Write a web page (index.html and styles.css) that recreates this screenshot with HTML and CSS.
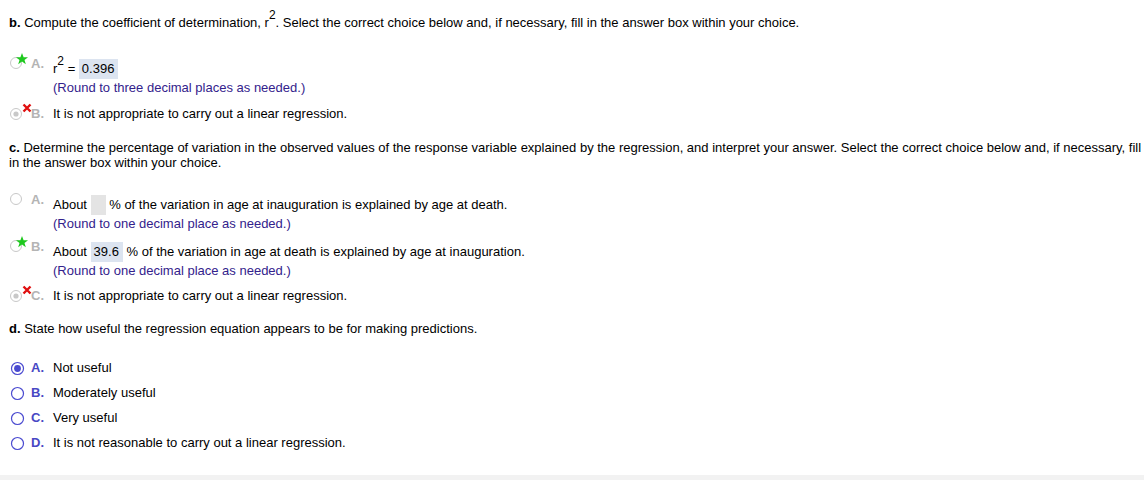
FILE: index.html
```html
<!DOCTYPE html>
<html>
<head>
<meta charset="utf-8">
<link rel="stylesheet" href="styles.css">
</head>
<body>
<div class="page">
  <div class="q q-b"><b>b.</b> Compute the coefficient of determination, r<sup class="sq">2</sup>. Select the correct choice below and, if necessary, fill in the answer box within your choice.</div>

  <div class="opt opt-box first-b">
    <span class="mark"><svg class="tall" width="22" height="24" viewBox="0 0 22 24"><circle cx="7" cy="10" r="5.5" fill="#fff" stroke="#c8c8c8" stroke-width="1"/><polygon points="13,0 14.6,4.2 19,4.2 15.5,6.9 16.8,11.2 13,8.6 9.2,11.2 10.5,6.9 7,4.2 11.4,4.2" fill="#1ec81e"/></svg></span>
    <span class="letter dis">A.</span>
    <div class="body">
      <div class="line">r<sup class="sq">2</sup> = <span class="ans">0.396</span></div>
      <div class="hint">(Round to three decimal places as needed.)</div>
    </div>
  </div>

  <div class="opt opt-plain gap10">
    <span class="mark"><svg class="xmark" width="22" height="20" viewBox="0 0 22 20"><circle cx="7" cy="13" r="5.5" fill="#fff" stroke="#c8c8c8" stroke-width="1"/><circle cx="7" cy="13" r="2.6" fill="#c8c8c8"/><path d="M14.5 3.5 L21.5 10.5 M21.5 3.5 L14.5 10.5" stroke="#e01010" stroke-width="2.4"/></svg></span>
    <span class="letter dis">B.</span>
    <div class="body"><div class="line">It is not appropriate to carry out a linear regression.</div></div>
  </div>

  <div class="q q-c"><b>c.</b> Determine the percentage of variation in the observed values of the response variable explained by the regression, and interpret your answer. Select the correct choice below and, if necessary, fill in the answer box within your choice.</div>

  <div class="opt opt-box first-c">
    <span class="mark"><svg class="tall" width="22" height="24" viewBox="0 0 22 24"><circle cx="7" cy="10" r="5.5" fill="#fff" stroke="#c8c8c8" stroke-width="1"/></svg></span>
    <span class="letter dis">A.</span>
    <div class="body">
      <div class="line">About <span class="ans empty"></span> % of the variation in age at inauguration is explained by age at death.</div>
      <div class="hint">(Round to one decimal place as needed.)</div>
    </div>
  </div>

  <div class="opt opt-box gap10">
    <span class="mark"><svg class="tall" width="22" height="24" viewBox="0 0 22 24"><circle cx="7" cy="10" r="5.5" fill="#fff" stroke="#c8c8c8" stroke-width="1"/><polygon points="13,0 14.6,4.2 19,4.2 15.5,6.9 16.8,11.2 13,8.6 9.2,11.2 10.5,6.9 7,4.2 11.4,4.2" fill="#1ec81e"/></svg></span>
    <span class="letter dis">B.</span>
    <div class="body">
      <div class="line">About <span class="ans">39.6</span> % of the variation in age at death is explained by age at inauguration.</div>
      <div class="hint">(Round to one decimal place as needed.)</div>
    </div>
  </div>

  <div class="opt opt-plain gap9">
    <span class="mark"><svg class="xmark" width="22" height="20" viewBox="0 0 22 20"><circle cx="7" cy="13" r="5.5" fill="#fff" stroke="#c8c8c8" stroke-width="1"/><circle cx="7" cy="13" r="2.6" fill="#c8c8c8"/><path d="M14.5 3.5 L21.5 10.5 M21.5 3.5 L14.5 10.5" stroke="#e01010" stroke-width="2.4"/></svg></span>
    <span class="letter dis">C.</span>
    <div class="body"><div class="line">It is not appropriate to carry out a linear regression.</div></div>
  </div>

  <div class="q q-d"><b>d.</b> State how useful the regression equation appears to be for making predictions.</div>

  <div class="choices">
    <div class="opt opt-plain">
      <span class="mark"><svg width="22" height="16" viewBox="0 0 22 16"><circle cx="8.5" cy="8.5" r="6" fill="#fff" stroke="#4a4ad0" stroke-width="1.2"/><circle cx="8.5" cy="8.5" r="3.4" fill="#4a4ad0"/></svg></span>
      <span class="letter act">A.</span>
      <div class="body"><div class="line">Not useful</div></div>
    </div>
    <div class="opt opt-plain">
      <span class="mark"><svg width="22" height="16" viewBox="0 0 22 16"><circle cx="8.5" cy="8.5" r="6" fill="#fff" stroke="#4a4ad0" stroke-width="1.2"/></svg></span>
      <span class="letter act">B.</span>
      <div class="body"><div class="line">Moderately useful</div></div>
    </div>
    <div class="opt opt-plain">
      <span class="mark"><svg width="22" height="16" viewBox="0 0 22 16"><circle cx="8.5" cy="8.5" r="6" fill="#fff" stroke="#4a4ad0" stroke-width="1.2"/></svg></span>
      <span class="letter act">C.</span>
      <div class="body"><div class="line">Very useful</div></div>
    </div>
    <div class="opt opt-plain">
      <span class="mark"><svg width="22" height="16" viewBox="0 0 22 16"><circle cx="8.5" cy="8.5" r="6" fill="#fff" stroke="#4a4ad0" stroke-width="1.2"/></svg></span>
      <span class="letter act">D.</span>
      <div class="body"><div class="line">It is not reasonable to carry out a linear regression.</div></div>
    </div>
  </div>
</div>
<div class="footer"></div>
</body>
</html>
```

FILE: styles.css
```css
html, body {
  margin: 0;
  padding: 0;
  background: #fff;
}
body {
  font-family: "Liberation Sans", Arial, sans-serif;
  font-size: 13px;
  color: #000;
}
.page {
  height: 460px;
  padding: 15px 0 0 9px;
  overflow: hidden;
}
.footer {
  height: 5px;
  background: #f2f2f2;
}
.q {
  line-height: 16px;
}
.q-c {
  margin-top: 18px;
  line-height: 15px;
}
.q-d {
  margin-top: 17px;
}
sup.sq {
  font-size: 12px;
  line-height: 0;
  vertical-align: 0;
  position: relative;
  top: -8px;
  margin-left: 0;
}
.opt {
  display: flex;
  align-items: flex-start;
}
.mark {
  width: 22px;
  height: 16px;
  flex: none;
  display: flex;
}
.opt-box .mark {
  height: 20px;
}
.mark svg {
  flex: none;
  overflow: visible;
}
.mark svg.tall {
  margin-top: -6px;
}
.mark svg.xmark {
  margin-top: -5px;
}
.letter {
  width: 22px;
  flex: none;
  font-weight: bold;
  line-height: 16px;
}
.letter.dis {
  color: #b4b4b4;
}
.letter.act {
  color: #4848c4;
}
.opt-box .letter {
  line-height: 10px;
}
.body {
  display: flex;
  flex-direction: column;
}
.line {
  line-height: 16px;
}
.opt-box .line {
  line-height: 20px;
}
.hint {
  color: #33228c;
  line-height: 16px;
  margin-top: 1px;
}
.first-b {
  margin-top: 28px;
}
.first-c {
  margin-top: 25px;
}
.gap10 {
  margin-top: 10px;
}
.gap9 {
  margin-top: 9px;
}
.ans {
  display: inline-block;
  background: #dce4f0;
  padding: 0 4px 0 3px;
  height: 20px;
  line-height: 20px;
  vertical-align: top;
}
.ans.empty {
  background: #e4e4e4;
  width: 15px;
  padding: 0;
}
.choices {
  margin-top: 23px;
  display: flex;
  flex-direction: column;
  gap: 9px;
}
```
